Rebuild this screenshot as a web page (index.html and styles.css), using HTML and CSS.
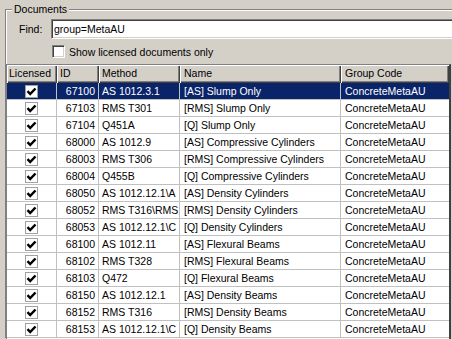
FILE: index.html
```html
<!DOCTYPE html>
<html>
<head>
<meta charset="utf-8">
<link rel="stylesheet" href="styles.css">
</head>
<body>
<div class="group">
  <div class="legend">Documents</div>
  <div class="find-row">
    <span class="find-label">Find:</span>
    <div class="find-input">group=MetaAU</div>
  </div>
  <div class="check-row">
    <span class="checkbox"></span>
    <span class="check-label">Show licensed documents only</span>
  </div>
  <div class="grid">
    <div class="row header">
      <div class="cell c1">Licensed</div>
      <div class="cell c2">ID</div>
      <div class="cell c3">Method</div>
      <div class="cell c4">Name</div>
      <div class="cell c5">Group Code</div>
    </div>
    <div class="row selected">
      <div class="cell c1"><span class="cb"><svg viewBox="0 0 11 11" width="11" height="11"><path d="M1.5 5.2 L4.2 8 L9.5 2.5" fill="none" stroke="#000" stroke-width="2.5"/></svg></span></div>
      <div class="cell c2">67100</div><div class="cell c3">AS 1012.3.1</div><div class="cell c4">[AS] Slump Only</div><div class="cell c5">ConcreteMetaAU</div>
    </div>
    <div class="row">
      <div class="cell c1"><span class="cb"><svg viewBox="0 0 11 11" width="11" height="11"><path d="M1.5 5.2 L4.2 8 L9.5 2.5" fill="none" stroke="#000" stroke-width="2.5"/></svg></span></div>
      <div class="cell c2">67103</div><div class="cell c3">RMS T301</div><div class="cell c4">[RMS] Slump Only</div><div class="cell c5">ConcreteMetaAU</div>
    </div>
    <div class="row">
      <div class="cell c1"><span class="cb"><svg viewBox="0 0 11 11" width="11" height="11"><path d="M1.5 5.2 L4.2 8 L9.5 2.5" fill="none" stroke="#000" stroke-width="2.5"/></svg></span></div>
      <div class="cell c2">67104</div><div class="cell c3">Q451A</div><div class="cell c4">[Q] Slump Only</div><div class="cell c5">ConcreteMetaAU</div>
    </div>
    <div class="row">
      <div class="cell c1"><span class="cb"><svg viewBox="0 0 11 11" width="11" height="11"><path d="M1.5 5.2 L4.2 8 L9.5 2.5" fill="none" stroke="#000" stroke-width="2.5"/></svg></span></div>
      <div class="cell c2">68000</div><div class="cell c3">AS 1012.9</div><div class="cell c4">[AS] Compressive Cylinders</div><div class="cell c5">ConcreteMetaAU</div>
    </div>
    <div class="row">
      <div class="cell c1"><span class="cb"><svg viewBox="0 0 11 11" width="11" height="11"><path d="M1.5 5.2 L4.2 8 L9.5 2.5" fill="none" stroke="#000" stroke-width="2.5"/></svg></span></div>
      <div class="cell c2">68003</div><div class="cell c3">RMS T306</div><div class="cell c4">[RMS] Compressive Cylinders</div><div class="cell c5">ConcreteMetaAU</div>
    </div>
    <div class="row">
      <div class="cell c1"><span class="cb"><svg viewBox="0 0 11 11" width="11" height="11"><path d="M1.5 5.2 L4.2 8 L9.5 2.5" fill="none" stroke="#000" stroke-width="2.5"/></svg></span></div>
      <div class="cell c2">68004</div><div class="cell c3">Q455B</div><div class="cell c4">[Q] Compressive Cylinders</div><div class="cell c5">ConcreteMetaAU</div>
    </div>
    <div class="row">
      <div class="cell c1"><span class="cb"><svg viewBox="0 0 11 11" width="11" height="11"><path d="M1.5 5.2 L4.2 8 L9.5 2.5" fill="none" stroke="#000" stroke-width="2.5"/></svg></span></div>
      <div class="cell c2">68050</div><div class="cell c3">AS 1012.12.1\A</div><div class="cell c4">[AS] Density Cylinders</div><div class="cell c5">ConcreteMetaAU</div>
    </div>
    <div class="row">
      <div class="cell c1"><span class="cb"><svg viewBox="0 0 11 11" width="11" height="11"><path d="M1.5 5.2 L4.2 8 L9.5 2.5" fill="none" stroke="#000" stroke-width="2.5"/></svg></span></div>
      <div class="cell c2">68052</div><div class="cell c3">RMS T316\RMS</div><div class="cell c4">[RMS] Density Cylinders</div><div class="cell c5">ConcreteMetaAU</div>
    </div>
    <div class="row">
      <div class="cell c1"><span class="cb"><svg viewBox="0 0 11 11" width="11" height="11"><path d="M1.5 5.2 L4.2 8 L9.5 2.5" fill="none" stroke="#000" stroke-width="2.5"/></svg></span></div>
      <div class="cell c2">68053</div><div class="cell c3">AS 1012.12.1\C</div><div class="cell c4">[Q] Density Cylinders</div><div class="cell c5">ConcreteMetaAU</div>
    </div>
    <div class="row">
      <div class="cell c1"><span class="cb"><svg viewBox="0 0 11 11" width="11" height="11"><path d="M1.5 5.2 L4.2 8 L9.5 2.5" fill="none" stroke="#000" stroke-width="2.5"/></svg></span></div>
      <div class="cell c2">68100</div><div class="cell c3">AS 1012.11</div><div class="cell c4">[AS] Flexural Beams</div><div class="cell c5">ConcreteMetaAU</div>
    </div>
    <div class="row">
      <div class="cell c1"><span class="cb"><svg viewBox="0 0 11 11" width="11" height="11"><path d="M1.5 5.2 L4.2 8 L9.5 2.5" fill="none" stroke="#000" stroke-width="2.5"/></svg></span></div>
      <div class="cell c2">68102</div><div class="cell c3">RMS T328</div><div class="cell c4">[RMS] Flexural Beams</div><div class="cell c5">ConcreteMetaAU</div>
    </div>
    <div class="row">
      <div class="cell c1"><span class="cb"><svg viewBox="0 0 11 11" width="11" height="11"><path d="M1.5 5.2 L4.2 8 L9.5 2.5" fill="none" stroke="#000" stroke-width="2.5"/></svg></span></div>
      <div class="cell c2">68103</div><div class="cell c3">Q472</div><div class="cell c4">[Q] Flexural Beams</div><div class="cell c5">ConcreteMetaAU</div>
    </div>
    <div class="row">
      <div class="cell c1"><span class="cb"><svg viewBox="0 0 11 11" width="11" height="11"><path d="M1.5 5.2 L4.2 8 L9.5 2.5" fill="none" stroke="#000" stroke-width="2.5"/></svg></span></div>
      <div class="cell c2">68150</div><div class="cell c3">AS 1012.12.1</div><div class="cell c4">[AS] Density Beams</div><div class="cell c5">ConcreteMetaAU</div>
    </div>
    <div class="row">
      <div class="cell c1"><span class="cb"><svg viewBox="0 0 11 11" width="11" height="11"><path d="M1.5 5.2 L4.2 8 L9.5 2.5" fill="none" stroke="#000" stroke-width="2.5"/></svg></span></div>
      <div class="cell c2">68152</div><div class="cell c3">RMS T316</div><div class="cell c4">[RMS] Density Beams</div><div class="cell c5">ConcreteMetaAU</div>
    </div>
    <div class="row">
      <div class="cell c1"><span class="cb"><svg viewBox="0 0 11 11" width="11" height="11"><path d="M1.5 5.2 L4.2 8 L9.5 2.5" fill="none" stroke="#000" stroke-width="2.5"/></svg></span></div>
      <div class="cell c2">68153</div><div class="cell c3">AS 1012.12.1\C</div><div class="cell c4">[Q] Density Beams</div><div class="cell c5">ConcreteMetaAU</div>
    </div>
  </div>
</div>
</body>
</html>
```
FILE: styles.css
```css
html, body {
  margin: 0;
  padding: 0;
}
body {
  width: 452px;
  height: 339px;
  overflow: hidden;
  background: #d4d0c8;
  color: #000;
  font-family: "Liberation Sans", Arial, sans-serif;
  font-size: 10.5px;
}
.group {
  margin: 9px 0 0 5px;
  border-top: 1px solid #808080;
  border-left: 1px solid #808080;
  box-shadow: inset 1px 1px 0 #fff;
  height: 329px;
  box-sizing: border-box;
}
.legend {
  width: max-content;
  margin: -7px 0 0 6px;
  padding: 0 2px;
  height: 13px;
  line-height: 13px;
  background: #d4d0c8;
}
.find-row {
  display: flex;
  align-items: center;
  margin-top: 3px;
  height: 20px;
}
.find-label {
  margin-left: 13px;
  width: 32px;
}
.find-input {
  flex: 1;
  margin-right: -20px;
  height: 20px;
  box-sizing: border-box;
  background: #fff;
  border-top: 1px solid #808080;
  border-left: 1px solid #808080;
  border-bottom: 1px solid #fff;
  border-right: 1px solid #fff;
  box-shadow: inset 1px 1px 0 #404040, inset -1px -1px 0 #d4d0c8;
  padding-left: 2px;
  line-height: 18px;
}
.check-row {
  display: flex;
  align-items: center;
  margin: 6px 0 0 46px;
  height: 13px;
}
.checkbox {
  width: 13px;
  height: 13px;
  box-sizing: border-box;
  background: #fff;
  border-top: 1px solid #808080;
  border-left: 1px solid #808080;
  border-bottom: 1px solid #fff;
  border-right: 1px solid #fff;
  box-shadow: inset 1px 1px 0 #404040, inset -1px -1px 0 #d4d0c8;
}
.check-label {
  margin-left: 4px;
}
.grid {
  margin-top: 6px;
  width: max-content;
  height: 274px;
  overflow: hidden;
  border-top: 1px solid #808080;
  border-left: 1px solid #808080;
  border-right: 2px solid #404040;
  background: #fff;
}
.row {
  display: flex;
  height: 17px;
}
.cell {
  box-sizing: border-box;
  height: 17px;
  line-height: 16px;
  padding: 0 3px;
  border-right: 1px solid #c0c0c0;
  border-bottom: 1px solid #c0c0c0;
  white-space: nowrap;
  overflow: hidden;
}
.c1 { width: 50px; display: flex; justify-content: center; align-items: center; padding: 0; }
.c2 { width: 42px; text-align: right; padding-right: 3px; }
.c3 { width: 81px; text-overflow: clip; }
.c4 { width: 161px; padding-left: 4px; }
.c5 { width: 108px; border-right: none; padding-left: 4px; }
.header { height: 18px; background: #d4d0c8; }
.header .cell {
  height: 18px;
  line-height: 17px;
  border: none;
  text-align: left;
  display: block;
  padding-left: 2px;
  box-shadow: inset 1px 1px 0 #fff, inset -1px -1px 0 #404040, inset -2px -2px 0 #808080;
}
.header .c2 { padding-left: 3px; }
.header .c3 { padding-left: 3px; }
.header .c4 { padding-left: 4px; }
.header .c5 { padding-left: 4px; }
.selected {
  background: #0a246a;
  color: #fff;
}
.cb {
  width: 13px;
  height: 13px;
  box-sizing: border-box;
  border: 1px solid #a0a0a0;
  background: #fff;
  display: block;
}
.cb svg {
  display: block;
}
```
